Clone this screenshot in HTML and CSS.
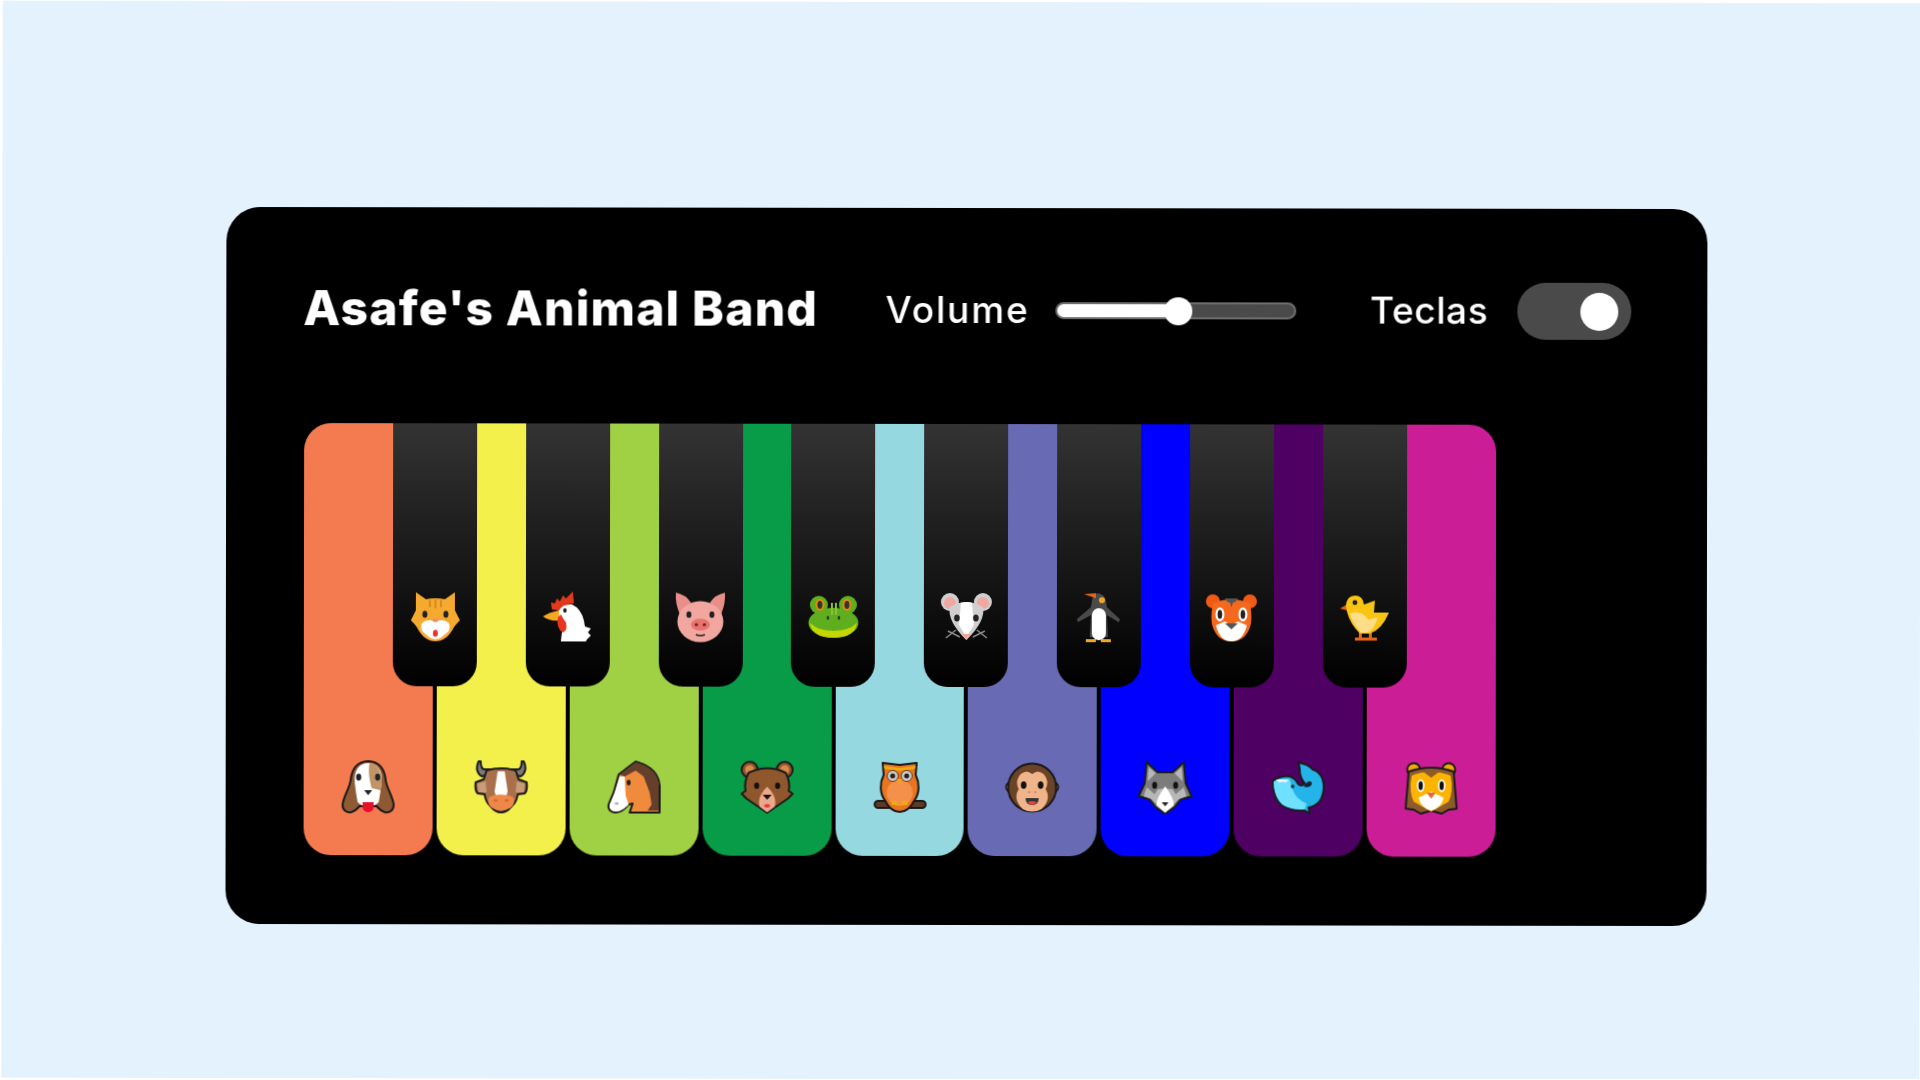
FILE: index.html
```html
<!DOCTYPE html>
<html lang="pt-BR">
<head>
    <meta charset="UTF-8">
    <meta name="viewport" content="width=device-width, initial-scale=1.0">
    <title>Asafe's Animal Band</title>
    <link rel="stylesheet" href="styles.css">
</head>
<body>
    <div class="page">
        <div class="band-card">
            <header class="band-header">
                <h1>Asafe's Animal Band</h1>
                <div class="volume">
                    <label for="volume">Volume</label>
                    <input type="range" id="volume" min="0" max="100" value="51">
                </div>
                <div class="keys-toggle">
                    <span>Teclas</span>
                    <label class="switch"><input type="checkbox" checked><span class="knob"></span></label>
                </div>
            </header>

            <div class="piano">
                <div class="white-keys">
                    <!-- dog -->
                    <div class="key white k1"><svg class="emoji" viewBox="0 0 53 53">
                        <path class="ol" fill="#8d5a33" d="M26.5 1C15 1 10 10 9 20 8 28 1 38 1 45c0 5 4 8 9 7 4-1 6-4 8-6h17c2 2 4 5 8 6 5 1 9-2 9-7 0-7-7-17-8-25C43 10 38 1 26.5 1Z"/>
                        <path fill="#fff" d="M26.5 3C17 3 12 11 13 22c1 8 2 15 3 20 3 3 6 4 10.5 5 4.5-1 7.5-2 10.5-5 1-5 2-12 3-20C41 11 36 3 26.5 3Z"/>
                        <path fill="#c19468" d="M28 3c7 0 12 8 12 18 0 3-1 6-1 9l-9-2c-2-8-4-17-2-25Z"/>
                        <ellipse cx="17" cy="17" rx="2.600" ry="3.400" fill="#222"/><ellipse cx="36" cy="17" rx="2.600" ry="3.400" fill="#222"/>
                        <path fill="#222" d="M22.500 30h8l-4 5Z"/>
                        <path fill="#e8102a" d="M21 42h11v5c0 3-3 5-5.500 5S21 50 21 47Z"/>
                    </svg></div>
                    <!-- cow -->
                    <div class="key white k2"><svg class="emoji" viewBox="0 0 53 53">
                        <path class="ol" fill="#7a7a7a" d="M4 1c-3 6-2 12 3 15l9-2V9H9C7 8 6 5 6 1ZM49 1c3 6 2 12-3 15l-9-2V9h7c2-1 3-4 3-8Z"/>
                        <path class="ol" fill="#a9714b" d="M12 10Q26.500 6 41 10l3 9 8 3q1 8-2 11l-7 1q-1 8-6 12-5 6-10.500 6T16 46q-5-4-6-12l-7-1q-3-3-2-11l8-3Z"/>
                        <path fill="#c89b7b" d="M3 23l8-2 1 11-8 0ZM50 23l-8-2-1 11 8 0Z"/>
                        <path fill="#fff" d="M23 11h7l3 20-2 8H22l-2-8Z"/>
                        <path fill="#f0874a" d="M14 38c3-5 22-5 25 0 2 7-4 12-12.500 12S12 45 14 38Z"/>
                        <ellipse cx="21" cy="40" rx="2.200" ry="1.500" fill="#d9692e"/><ellipse cx="32" cy="40" rx="2.200" ry="1.500" fill="#d9692e"/>
                    </svg></div>
                    <!-- horse -->
                    <div class="key white k3"><svg class="emoji" viewBox="0 0 53 53">
                        <path class="ol" fill="#f08a3c" d="M28 1 20 7 11 14 6 32 1 44c-1 5 2 8 7 8 5 0 9-3 13-8l4-1-3 9h30V25C51 13 42 5 28 1Z"/>
                        <path fill="#643f2c" d="M28 2 12 14l5 2 11-6 8 6 6 16 2 12-4 6h11V25C51 13 42 5 28 2Z"/>
                        <path fill="#fff" d="M12 16 7 32 2 44c-1 4 2 7 6 7 5 0 9-3 13-7l-3-9-1-19Z"/>
                        <ellipse cx="21" cy="22" rx="2" ry="2.800" fill="#222"/>
                        <ellipse cx="9" cy="43" rx="2" ry="1.300" fill="#aaa"/>
                    </svg></div>
                    <!-- bear -->
                    <div class="key white k4"><svg class="emoji" viewBox="0 0 53 53">
                        <circle class="ol" cx="9" cy="9" r="8" fill="#90572c"/><circle class="ol" cx="44" cy="9" r="8" fill="#90572c"/>
                        <circle cx="9" cy="9" r="4.500" fill="#d98a4b"/><circle cx="44" cy="9" r="4.500" fill="#d98a4b"/>
                        <path class="ol" fill="#90572c" d="M8 12Q26.500 3 45 12q5 10 3 18l4 3-5 5-20.500 14L6 38l-5-5 4-3Q3 22 8 12Z"/>
                        <path fill="#eaa98a" d="M26.500 26Q16 36 19 46l7.500 5.500L34 46q3-10-7.500-20Z"/>
                        <ellipse cx="16" cy="25" rx="2.500" ry="3.200" fill="#111"/><ellipse cx="37" cy="25" rx="2.500" ry="3.200" fill="#111"/>
                        <path fill="#111" d="M22 34h9l-4.500 5Z"/>
                        <ellipse cx="26.500" cy="45" rx="3" ry="1.800" fill="#e8364a"/>
                    </svg></div>
                    <!-- owl -->
                    <div class="key white k5"><svg class="emoji" viewBox="0 0 53 53">
                        <rect class="ol" x="1" y="40" width="51" height="7" rx="3.500" fill="#5c3b26"/>
                        <path class="ol" fill="#ea7420" d="M9 2 26 4l17-2-1 12c4 8 4 18-1 25-3 6-8 12-15 12s-12-6-15-12C6 32 6 22 10 14Z"/>
                        <ellipse cx="26" cy="32" rx="13" ry="13" fill="#f4904a"/>
                        <path fill="#eeaa10" d="M10 5 26 7l16-2-1 3-15 2-15-2Z"/>
                        <circle cx="19" cy="15" r="5.500" fill="#ccc" stroke="#6a3a14"/><circle cx="33" cy="15" r="5.500" fill="#ccc" stroke="#6a3a14"/>
                        <circle cx="19" cy="15" r="2.500" fill="#222"/><circle cx="33" cy="15" r="2.500" fill="#222"/>
                        <path fill="#eeaa10" d="M23.500 18h5L26 24ZM18 40h6v4h-6ZM28 40h6v4h-6Z"/>
                    </svg></div>
                    <!-- monkey -->
                    <div class="key white k6"><svg class="emoji" viewBox="0 0 53 53">
                        <circle class="ol" cx="5.500" cy="26" r="5" fill="#f0b48a"/><circle class="ol" cx="47.500" cy="26" r="5" fill="#f0b48a"/>
                        <circle class="ol" cx="26.500" cy="26.500" r="24" fill="#6b4326"/>
                        <path fill="#f0b48a" d="M26.500 13Q32 8 38 13q6 7 2 15 6 10-4 20-9.500 5-19 0Q7 38 13 28q-4-8 2-15 6-5 11.500 0Z"/>
                        <ellipse cx="18" cy="24" rx="2.800" ry="3.800" fill="#111"/><ellipse cx="35" cy="24" rx="2.800" ry="3.800" fill="#111"/>
                        <circle cx="23.500" cy="31" r="1" fill="#d8794a"/><circle cx="29.500" cy="31" r="1" fill="#d8794a"/>
                        <path fill="#333" d="M20 37h13c0 5-3 7-6.500 7S20 42 20 37Z"/>
                        <path fill="#e8433a" d="M22 41q4.500-2 9 0-2 3-4.500 3T22 41Z"/>
                    </svg></div>
                    <!-- wolf -->
                    <div class="key white k7"><svg class="emoji" viewBox="0 0 53 53">
                        <path class="ol" fill="#7c7c7c" d="M8 1 19 11h15L45 1l2 21 6 13-11 3-6 8-9.500 6.500L17 46l-6-8-11-3 6-13Z"/>
                        <path fill="#b8b8b8" d="M10 6 17 12 9 20ZM43 6 36 12l8 8ZM8 26l8 7 3-5 8-1-8 17-6-6-8-3ZM45 26l-8 7-3-5-8-1 8 17 6-6 8-3Z"/>
                        <path fill="#fff" d="M26.500 25Q17 38 18 44l8.500 7.500L35 44q1-6-8.500-19Z"/>
                        <ellipse cx="16" cy="24" rx="2.500" ry="3.500" fill="#111"/><ellipse cx="37" cy="24" rx="2.500" ry="3.500" fill="#111"/>
                        <path fill="#222" d="M23 41h7l-3.500 4Z"/>
                    </svg></div>
                    <!-- whale -->
                    <div class="key white k8"><svg class="emoji" viewBox="0 0 53 53">
                        <path class="ol" fill="#24b4ea" d="M1 20q7-6 17-5 6 2 8 7 4 4 7 0-5-6-5-14l-1-7q10 2 14 7 12 4 11 20-2 16-15 18l1 6-5-3Q20 50 10 44 1 36 1 20Z"/>
                        <path fill="#70e0ff" d="M2 20q8-3 16-2l2 8q4 12 15 16l-2 6Q14 48 8 40 2 32 2 20Z"/>
                        <path fill="#123" d="M32 25c2-4 6-7 8-4 1 3-3 6-8 4Z"/>
                        <path fill="#fff" d="M4 18h13l-3 3-3-1-3 1Z"/>
                        <circle cx="21" cy="25" r="1.800" fill="#123"/>
                    </svg></div>
                    <!-- lion -->
                    <div class="key white k9"><svg class="emoji" viewBox="0 0 53 53">
                        <circle class="ol" cx="9" cy="8" r="6.500" fill="#f2a900"/><circle class="ol" cx="44" cy="8" r="6.500" fill="#f2a900"/>
                        <path class="ol" fill="#8d5a2c" d="M4 10Q26.500 2 49 10l3 37-8 1-7 4-10.500-3L16 52l-7-4-8-1Z"/>
                        <path fill="#fdb301" d="M7 14Q26.500 6 46 14q3 16-2 26l-17.500 10L9 40Q4 30 7 14Z"/>
                        <path fill="#8d5a2c" d="M17 9q9.500-3 19 0l-9.500 7Z"/>
                        <ellipse cx="16" cy="24" rx="3.800" ry="6.500" fill="#fff"/><ellipse cx="37" cy="24" rx="3.800" ry="6.500" fill="#fff"/>
                        <path fill="#fff" d="M14 36l12.500-6L39 36q-2 10-12.500 13Q16 46 14 36Z"/>
                        <ellipse cx="16" cy="24" rx="2.200" ry="4.600" fill="#111"/><ellipse cx="37" cy="24" rx="2.200" ry="4.600" fill="#111"/>
                        <path fill="#f0622b" d="M22 31h9l-4.500 6Z"/>
                    </svg></div>
                </div>

                <div class="black-keys">
                    <!-- cat -->
                    <div class="key black"><svg class="emoji" viewBox="0 0 53 53">
                        <path fill="#f5a92e" d="M7 2l10 7q9.500-2 19 0L46 2v18l5 10q-4 4-6 7-7 14-18.500 14T8 37q-2-3-6-7l5-10Z"/>
                        <path fill="none" stroke="#d98a1a" stroke-width="2" d="M26.500 9v9M21 10v7M32 10v7"/>
                        <path fill="#fff" d="M26.500 31Q18 28 13 33q-3 7 5 12 4 4 8.500 4t8.500-4q8-5 5-12-5-5-13.500-2Z"/>
                        <ellipse cx="16" cy="24" rx="2.500" ry="3.500" fill="#222"/><ellipse cx="37" cy="24" rx="2.500" ry="3.500" fill="#222"/>
                        <ellipse cx="26.500" cy="30" rx="3" ry="1.800" fill="#f08a6a"/>
                        <ellipse cx="26.500" cy="43" rx="2.500" ry="3.500" fill="#e8352b"/>
                    </svg></div>
                    <!-- chicken -->
                    <div class="key black"><svg class="emoji" viewBox="0 0 53 53">
                        <path fill="#e0391c" d="M11 19 10 12l4 1 2-5 3 3 3-6 3 3 7-7 1 12q-9 0-15 7Z"/>
                        <path fill="#fff" d="M18 20q4-7 13-6 9 4 12 16l1 6 6 2-3 4 3 3-4 4-1 2H20l1-9q3-4 1-8l-4-4Z"/>
                        <path fill="#f7a823" d="M18 20Q8 22 2 26q6 5 17 4Z"/>
                        <path fill="#e8351f" d="M17 27q-2 11 5 15 5-2 3-10-3-4-5-8Z"/>
                        <ellipse cx="24" cy="20" rx="1.800" ry="2.300" fill="#222"/>
                    </svg></div>
                    <!-- pig -->
                    <div class="key black"><svg class="emoji" viewBox="0 0 53 53">
                        <path fill="#e98f8a" d="M2 2q10 2 15 10L6 24Q1 12 2 2ZM51 2q-10 2-15 10l11 12q5-12 4-22Z"/>
                        <ellipse cx="26.500" cy="31" rx="23" ry="20.500" fill="#f1a6a0"/>
                        <ellipse cx="26.500" cy="34" rx="9.500" ry="6" fill="#e8726f"/>
                        <ellipse cx="22.500" cy="34" rx="1.800" ry="1.500" fill="#7a2525"/><ellipse cx="30.500" cy="34" rx="1.800" ry="1.500" fill="#7a2525"/>
                        <ellipse cx="15" cy="24" rx="2.500" ry="3.200" fill="#222"/><ellipse cx="38" cy="24" rx="2.500" ry="3.200" fill="#222"/>
                        <path fill="none" stroke="#222" stroke-width="1.500" d="M22 44q4.500 2 9 0"/>
                    </svg></div>
                    <!-- frog -->
                    <div class="key black"><svg class="emoji" viewBox="0 0 53 53">
                        <circle cx="12" cy="14" r="9" fill="#5fae1e"/><circle cx="41" cy="14" r="9" fill="#5fae1e"/>
                        <ellipse cx="26.500" cy="32" rx="25" ry="15" fill="#5fae1e"/>
                        <path fill="#c4d600" d="M3 32q8 8 23.500 8T50 32q-2 15-23.500 15T3 32Z"/>
                        <ellipse cx="13" cy="14" rx="4.500" ry="6" fill="#e58a0f"/><ellipse cx="40" cy="14" rx="4.500" ry="6" fill="#e58a0f"/>
                        <ellipse cx="13" cy="14" rx="2.500" ry="4" fill="#333"/><ellipse cx="40" cy="14" rx="2.500" ry="4" fill="#333"/>
                        <path fill="#86c23a" d="M24 12h2v12h-2ZM28 12h2v12h-2Z"/>
                        <ellipse cx="21" cy="27" rx="1.300" ry="2" fill="#333"/><ellipse cx="32" cy="27" rx="1.300" ry="2" fill="#333"/>
                    </svg></div>
                    <!-- mouse -->
                    <div class="key black"><svg class="emoji" viewBox="0 0 53 53">
                        <circle cx="10" cy="11" r="9" fill="#cfcfcf"/><circle cx="43" cy="11" r="9" fill="#cfcfcf"/>
                        <circle cx="10" cy="12" r="6" fill="#f0a8a0"/><circle cx="43" cy="12" r="6" fill="#f0a8a0"/>
                        <path fill="#cfcfcf" d="M10 16q16.500-10 33 0 3 14-16.500 33Q7 30 10 16Z"/>
                        <path fill="#fff" d="M21 12q5.500-2 11 0l2 22-7.500 12L19 34Z"/>
                        <path fill="#f0a8a0" d="M21 43h11l-5.500 6Z"/>
                        <ellipse cx="17" cy="27" rx="2.800" ry="3.500" fill="#222"/><ellipse cx="36" cy="27" rx="2.800" ry="3.500" fill="#222"/>
                        <path fill="none" stroke="#8a8a8a" stroke-width="1.500" d="M8 40l12 6M6 47l10-8M45 40l-12 6M47 47l-10-8"/>
                    </svg></div>
                    <!-- penguin -->
                    <div class="key black"><svg class="emoji" viewBox="0 0 53 53">
                        <path fill="#4a4a4a" d="M26 2q7 1 8 8l1 6 13 12-1 3-12-7 1 22H18l1-22-13 7-1-3 14-12 1-6q1-8 6-8Z"/>
                        <path fill="#e8641b" d="M12 3 24 2v5Z"/>
                        <circle cx="30" cy="9" r="3" fill="#f0a820"/>
                        <rect x="20" y="17" width="14" height="32" rx="7" fill="#fff"/>
                        <path fill="#f0a820" d="M14 48h10v3H14ZM29 48h10v3H29Z"/>
                    </svg></div>
                    <!-- tiger -->
                    <div class="key black"><svg class="emoji" viewBox="0 0 53 53">
                        <circle cx="8" cy="10" r="7" fill="#f15a16"/><circle cx="45" cy="10" r="7" fill="#f15a16"/>
                        <path fill="#f4691e" d="M8 12Q26.500 4 45 12q3 16 0 24-5 14-18.500 14T8 36Q5 28 8 12Z"/>
                        <path fill="#555" d="M20 7h13l-3 4h-2l-1.500 5-1.500-5h-2Z"/>
                        <ellipse cx="15" cy="23" rx="4.500" ry="7" fill="#fff"/><ellipse cx="38" cy="23" rx="4.500" ry="7" fill="#fff"/>
                        <path fill="#fff" d="M11 34l9-4 6.500 4 6.500-4 9 4q-4 16-15.500 16T11 34Z"/>
                        <ellipse cx="15" cy="23" rx="2.300" ry="4.600" fill="#222"/><ellipse cx="38" cy="23" rx="2.300" ry="4.600" fill="#222"/>
                        <path fill="#555" d="M20 32h13l-6.500 6Z"/>
                    </svg></div>
                    <!-- chick -->
                    <div class="key black"><svg class="emoji" viewBox="0 0 53 53">
                        <path fill="#e8641b" d="M21 40h3v6h-3ZM31 40h3v6h-3ZM17 46h22v3H17ZM9 13l-7 4 8 2Z"/>
                        <path fill="#f9c513" d="M8 14q1-10 9-10t9 9l11-4-1 12h15q-7 17-19 21H22Q12 32 9 20Z"/>
                        <path fill="#fddc8a" d="M12 22q12-4 18 6l10-2q-4 12-10 15h-7q-8-8-11-19Z"/>
                        <circle cx="17" cy="11" r="3" fill="#222" stroke="#f9c513"/>
                    </svg></div>
                </div>
            </div>
        </div>
    </div>
</body>
</html>
```

FILE: styles.css
```css
* {
    margin: 0;
    padding: 0;
    box-sizing: border-box;
}

body {
    background: #fff;
    overflow: hidden;
}

/* the whole page sits slightly crooked in the window */
.page {
    width: 1918px;
    height: 1077px;
    margin: 2px 0 0 2px;
    padding: 206px 0 0 224px;
    background: #e3f2fd;
    font-family: Inter, "Open Sans", sans-serif;
    color: #fff;
    transform: rotate(0.08deg);
    filter: blur(0.6px);
}

.band-card {
    width: 1481px;
    height: 717px;
    padding: 74px 76px 0 78px;
    background: #000;
    border-radius: 34px;
}

/* Header */
.band-header {
    display: flex;
    align-items: center;
    height: 57px;
}

.band-header h1 {
    width: 583px;
    margin-left: -1px;
    padding-bottom: 4px;
    font-size: 48px;
    font-weight: 800;
    letter-spacing: 1.2px;
    white-space: nowrap;
}

.volume {
    display: flex;
    align-items: center;
    gap: 30px;
    width: 487px;
}

.volume label,
.keys-toggle span {
    padding-bottom: 3px;
    font-size: 37px;
    font-weight: 500;
}

.volume label {
    width: 141px;
    margin-left: 1px;
    margin-right: -1px;
    letter-spacing: 1.9px;
}

.keys-toggle span {
    letter-spacing: 0.6px;
}

.volume input {
    appearance: none;
    -webkit-appearance: none;
    width: 241px;
    height: 17px;
    border: 2px solid #6e6e6e;
    border-radius: 9px;
    background: linear-gradient(to right, #fff 51%, #4a4a4a 51%);
    overflow: visible;
}

.volume input::-webkit-slider-thumb {
    -webkit-appearance: none;
    width: 28px;
    height: 28px;
    border-radius: 50%;
    background: #fff;
}

.keys-toggle {
    display: flex;
    align-items: center;
    gap: 29px;
}

.switch {
    display: block;
    position: relative;
    width: 114px;
    height: 57px;
}

.switch input {
    display: none;
}

.knob {
    display: block;
    width: 100%;
    height: 100%;
    background: #4a4a4a;
    border-radius: 29px;
}

.knob::before {
    content: "";
    position: absolute;
    right: 13px;
    top: 10px;
    width: 38px;
    height: 38px;
    border-radius: 50%;
    background: #fff;
}

/* Piano */
.piano {
    position: relative;
    width: 1192px;
    height: 432px;
    margin-top: 85px;
}

.white-keys {
    display: flex;
    gap: 4px;
    height: 100%;
}

.key {
    display: flex;
    justify-content: center;
    align-items: flex-end;
}

.key.white {
    flex: 1;
    padding-bottom: 42px;
    border-radius: 0 0 27px 27px;
}

.k1 { background: #f47a50; }
.k2 { background: #f3ef4b; }
.k3 { background: #a0d145; }
.k4 { background: #099c48; }
.k5 { background: #96d8df; }
.k6 { background: #686bb3; }
.k7 { background: #0000ff; }
.k8 { background: #4f0063; }
.k9 { background: #cb1d96; }

.key.k1 { border-top-left-radius: 27px; }
.key.k9 { border-top-right-radius: 27px; }

.black-keys {
    position: absolute;
    top: 0;
    left: 89px;
    display: flex;
    gap: 48.8px;
}

.key.black {
    width: 84px;
    height: 263px;
    padding-bottom: 43px;
    background: linear-gradient(#333, #000);
    border-radius: 0 0 24px 24px;
}

.emoji {
    display: block;
    width: 53px;
    height: 53px;
    overflow: visible;
}

.ol {
    stroke: #1a1a1a;
    stroke-width: 2;
    stroke-linejoin: round;
}
```
